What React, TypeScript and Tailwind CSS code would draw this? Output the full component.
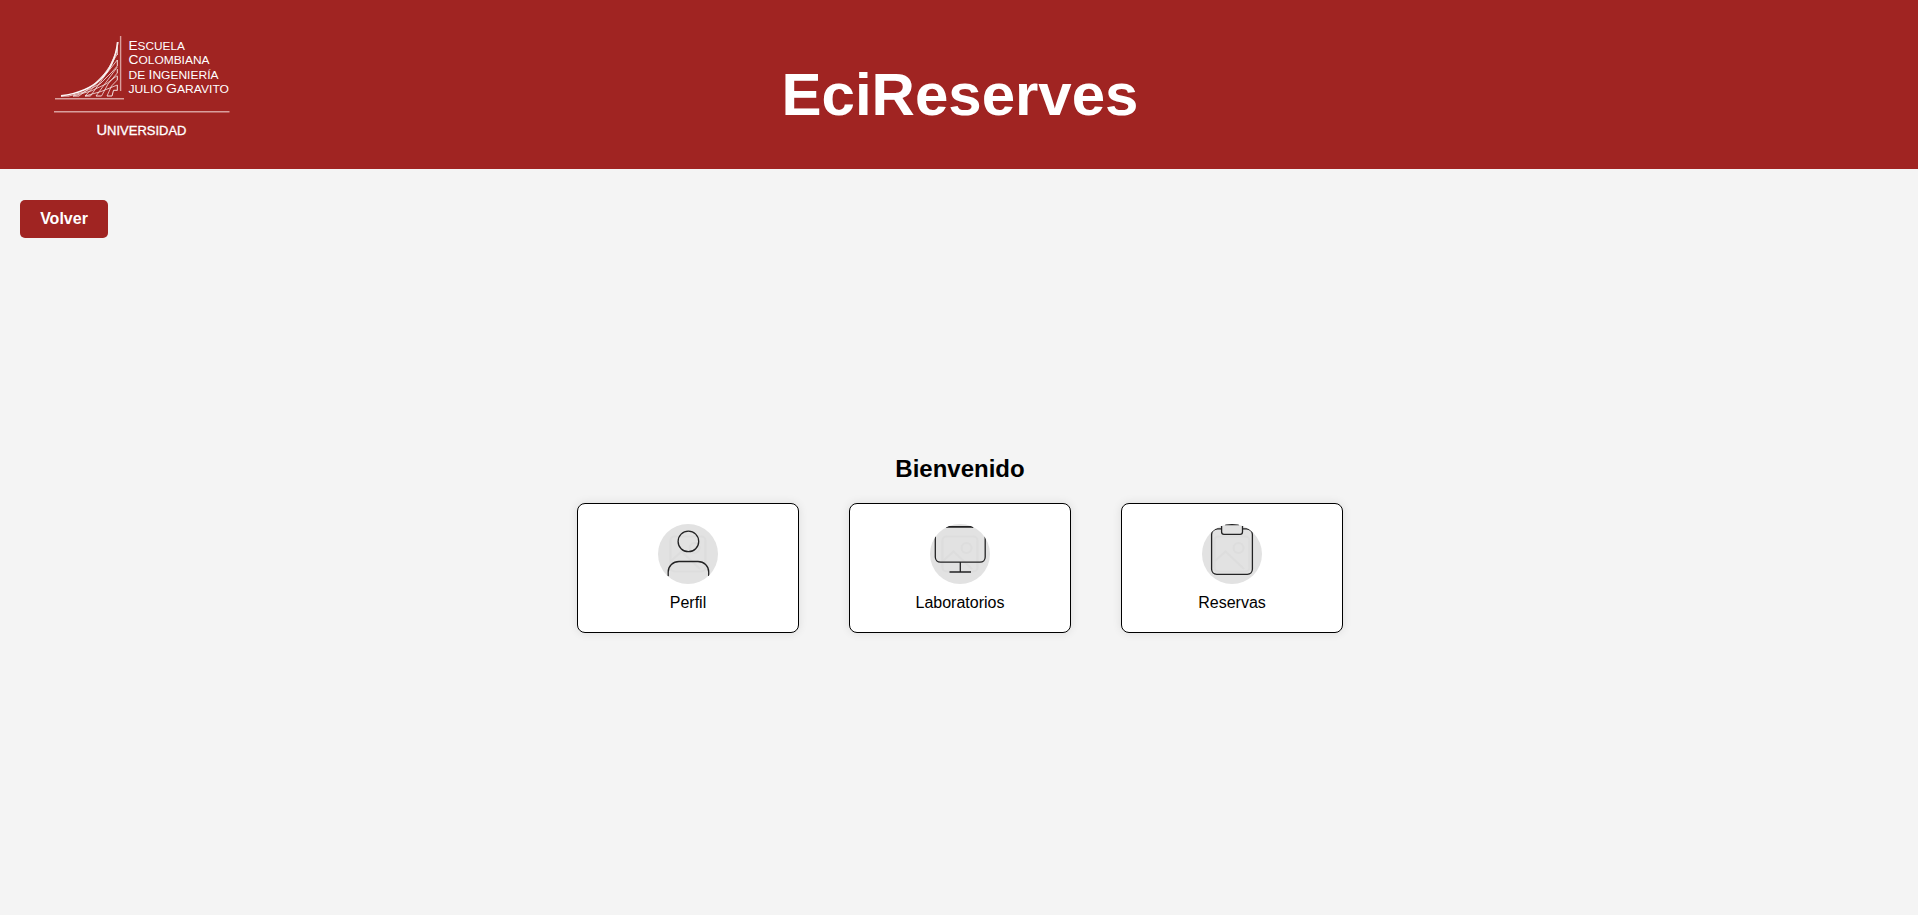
import type { ReactNode } from 'react';

const logoLines = [
  { y: 50, width: 56.5, parts: [['E', 1], ['SCUELA', 0]] },
  { y: 64.2, width: 81, parts: [['C', 1], ['OLOMBIANA', 0]] },
  { y: 78.6, width: 90, parts: [['DE ', 0], ['I', 1], ['NGENIERÍA', 0]] },
  { y: 93, width: 100.5, parts: [['JULIO ', 0], ['G', 1], ['ARAVITO', 0]] },
] as const;

// Rising strands climb towards the mast, falling strands fan out from the curve.
const strands = [
  'M79 96L93 85.5L108 70L117.3 50',
  'M85 96L100 80L112 63L117.3 54',
  'M90.5 96L105 75.5L117.3 60',
  'M96 96L105.5 83L117.3 67',
  'M101.5 96L108 84L117.3 73',
  'M107 96L111.5 86L117.3 80',
  'M69 96L84 92L100 84L112 72L117.3 66',
  'M73 96L91 91L106 84L117.3 75.5',
  'M85 96L101 91.5L117.3 85',
];

function Logo() {
  return (
    <svg
      className="block shrink-0"
      width="200"
      height="130"
      viewBox="40 20 200 130"
      fill="none"
      role="img"
      aria-label="Escuela Colombiana de Ingeniería Julio Garavito"
    >
      <path d="M61 95.8C88 92.5 113 80 117.8 42" stroke="#fff" strokeWidth="1.7" />
      <g stroke="#f5e3e2" strokeWidth=".8">
        {strands.map((d) => (
          <path key={d} d={d} />
        ))}
        <path
          d="M61 96H69M73 96H79M85 96H90.5M96 96H101.5M107 96H112L113.5 90.3H117.3M117.3 42V55M117.3 60V66M117.3 69V73M117.3 76V80M117.3 85V90.5"
          strokeWidth="1"
        />
      </g>
      <path d="M120.6 36V91M55 98.7H124M54 111.7H229.5" stroke="#d99f9d" strokeWidth="1.4" />
      <g fill="#fff" className="font-['Liberation_Sans',Arial,sans-serif]">
        {logoLines.map((line) => (
          <text key={line.y} x="128.5" y={line.y} textLength={line.width} lengthAdjust="spacingAndGlyphs">
            {line.parts.map(([text, big]) => (
              <tspan key={text} fontSize={big ? 13.5 : 11.7}>
                {text}
              </tspan>
            ))}
          </text>
        ))}
        <text x="96.5" y="134.7" textLength="90" lengthAdjust="spacingAndGlyphs" stroke="#fff" strokeWidth=".3">
          <tspan fontSize="14">U</tspan>
          <tspan fontSize="12.4">NIVERSIDAD</tspan>
        </text>
      </g>
    </svg>
  );
}

function IconCircle({ children }: { children: ReactNode }) {
  return (
    <svg className="size-[60px] rounded-full bg-[#e2e2e2]" viewBox="0 0 60 60" fill="none" stroke="#222223" strokeWidth="1.3">
      <g stroke="#dddddd" strokeWidth="2.2">
        <rect x="12.5" y="12.5" width="35" height="35" rx="4" />
        <circle cx="36.5" cy="24" r="5" />
        <path d="M13 37L23.5 27.5L42 45" />
      </g>
      {children}
    </svg>
  );
}

const cards = [
  {
    label: 'Perfil',
    icon: (
      <>
        <circle cx="30.4" cy="17.4" r="10.3" />
        <path d="M10.2 52.3V48C10.2 42 15 37.5 21 37.5H40C46 37.5 50.7 42 50.7 48V52" />
      </>
    ),
  },
  {
    label: 'Laboratorios',
    icon: (
      <>
        <path d="M15.8 3.3Q16.5 2.8 18 2.8H41Q42.5 2.8 43.5 3.3" strokeWidth="1.8" />
        <path d="M5.3 12.5V33C5.3 36 7.5 38.2 10.5 38.2H50C53 38.2 55.2 36 55.2 33V12.5M30.3 38.2V48M19.5 48H41" />
      </>
    ),
  },
  {
    label: 'Reservas',
    icon: (
      <>
        <path d="M19.5 4.8H15.5C12 4.8 9.6 7.5 9.6 10.5V45C9.6 48 11.8 50.3 14.8 50.3H45.3C48.3 50.3 50.4 48 50.4 45V10.5C50.4 7.5 48 4.8 44.5 4.8H41" />
        <path d="M19.6 2V8C19.6 9.5 20.5 10.4 22 10.4H38.2C39.7 10.4 40.5 9.5 40.5 8V2M23 .6H37" />
      </>
    ),
  },
];

export default function App() {
  return (
    <div className="flex min-h-screen flex-col bg-[#f4f4f4] font-['Liberation_Sans',Arial,sans-serif] text-base text-black">
      <header className="grid h-[169px] grid-cols-[240px_1fr_240px] items-start bg-[#a02422] pt-5">
        <div className="pl-10">
          <Logo />
        </div>
        <h1 className="pt-10 pl-0.5 text-center text-[60px] leading-[69px] font-bold text-white">EciReserves</h1>
      </header>
      <div className="px-5 pt-[31px]">
        <button type="button" className="h-[38px] w-[88px] rounded-[5px] bg-[#a02422] text-base font-bold text-white">
          Volver
        </button>
      </div>
      <main className="flex flex-col items-center pt-[217px] pl-0.5">
        <h2 className="text-2xl leading-7 font-bold">Bienvenido</h2>
        <div className="mt-5 flex gap-[50px]">
          {cards.map((card) => (
            <div
              key={card.label}
              className="flex h-[130px] w-[222px] flex-col items-center gap-2.5 rounded-lg border border-black bg-white p-5 shadow-[0_0_10px_rgba(0,0,0,0.1)]"
            >
              <IconCircle>{card.icon}</IconCircle>
              <p className="leading-[18px]">{card.label}</p>
            </div>
          ))}
        </div>
      </main>
    </div>
  );
}
